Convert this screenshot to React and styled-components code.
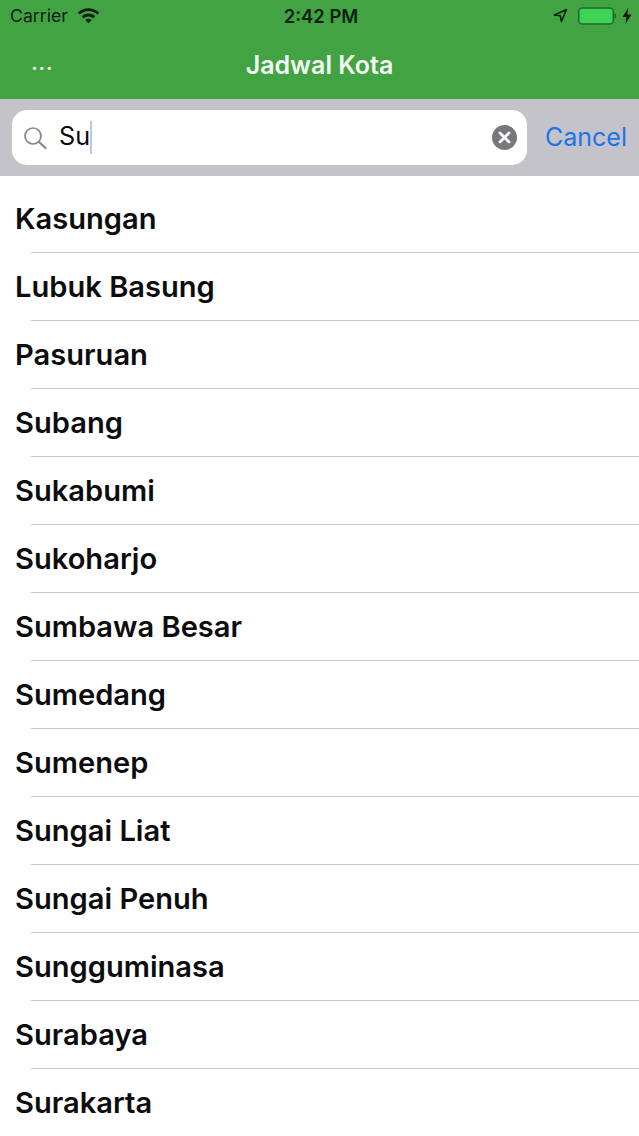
import React from 'react';
import styled, { createGlobalStyle } from 'styled-components';

const Global = createGlobalStyle`
  html, body { margin: 0; padding: 0; background: #fff; }
  body { width: 639px; height: 1136px; overflow: hidden; font-family: Inter, "Liberation Sans", sans-serif; }
`;
const Page = styled.div`width: 639px; height: 1136px; overflow: hidden; display: flex; flex-direction: column;`;
const Header = styled.header`height: 99px; background: #42a343; display: flex; flex-direction: column; flex: none;`;
const StatusBar = styled.div`
  height: 32px; box-sizing: border-box; padding: 0 7px 1px 10px; display: flex; align-items: center; justify-content: space-between;
  color: #0d1f0e;
`;
const StatusSide = styled.div`flex: 1; display: flex; align-items: center; gap: ${p => p.$gap || 9}px; justify-content: ${p => p.$end ? 'flex-end' : 'flex-start'};`;
const BatteryGroup = styled.div`display: flex; align-items: center; gap: 5px;`;
const Time = styled.div`font-weight: 600; font-size: 18.4px;`;
const Carrier = styled.span`font-size: 17.7px; font-weight: 400;`;
const NavBar = styled.div`flex: 1; position: relative; display: flex; align-items: center; justify-content: center; padding-bottom: 2px;`;
const Title = styled.div`color: #f4faf4; font-size: 25px; font-weight: 600;`;
const Back = styled.div`position: absolute; left: 31px; top: 18px; color: #f4faf4; font-size: 23px; font-weight: 500; line-height: 24px; letter-spacing: 0.4px;`;
const SearchBar = styled.div`height: 77px; flex: none; background: #c4c3c9; display: flex; align-items: center; padding: 0 12px; gap: 18px; box-sizing: border-box;`;
const SearchField = styled.div`
  flex: 1; height: 55px; background: #fff; border-radius: 15px; display: flex; align-items: center;
  padding: 0 10px 0 11px; gap: 12px;
`;
const Query = styled.div`flex: 1; display: flex; align-items: center; font-size: 25.2px; color: #0b0b0f; line-height: 33px;`;
const QueryText = styled.span`position: relative; top: -1px;`;
const Caret = styled.span`width: 1.5px; height: 33px; background: #b9c4ef;`;
const Cancel = styled.div`color: #1c73ea; font-size: 25px; font-weight: 400; padding-bottom: 2px;`;
const List = styled.ul`list-style: none; margin: 0; padding: 9px 0 0; flex: 1;`;
const Row = styled.li`
  height: 68px; box-sizing: border-box; padding: 0 0 2px 15px; display: flex; align-items: center;
  position: relative; font-size: 29.1px; font-weight: 600; color: #0c0c0e;
  &::after { content: ''; position: absolute; left: 31px; right: 0; bottom: 0; height: 1.5px; background: #c9c8cd; }
`;

const Wifi = () => (
  <svg width="23" height="17" viewBox="0 0 22 16" fill="#0d1f0e">
    <path d="M11 1C7 1 3.5 2.6 0.8 5.1L2.7 7.1C4.9 5 7.8 3.8 11 3.8S17.1 5 19.3 7.1L21.2 5.1C18.5 2.6 15 1 11 1Z" />
    <path d="M11 6.2C8.5 6.2 6.3 7.2 4.6 8.8L6.5 10.8C7.7 9.7 9.3 9 11 9S14.3 9.7 15.5 10.8L17.4 8.8C15.7 7.2 13.5 6.2 11 6.2Z" />
    <path d="M11 11.2C9.8 11.2 8.8 11.6 8 12.4L11 15.5L14 12.4C13.2 11.6 12.2 11.2 11 11.2Z" />
  </svg>
);
const Location = () => (
  <svg width="15" height="15" viewBox="0 0 15 15" fill="none" stroke="#0d1f0e" strokeWidth="1.6" strokeLinejoin="round">
    <path d="M1.5 7L13.5 1.5L8.5 13.5L7.3 7.8Z" />
  </svg>
);
const Battery = () => (
  <svg width="39" height="18" viewBox="0 0 39 18">
    <rect x="0.75" y="1" width="34.5" height="16" rx="3.5" fill="#3ed257" stroke="#1f6a2c" strokeWidth="1.5" />
    <rect x="36.5" y="6.5" width="1.5" height="5" rx="0.7" fill="#1f6a2c" />
  </svg>
);
const Bolt = () => (
  <svg width="10" height="16" viewBox="0 0 10 16" fill="#0d1f0e">
    <path d="M6.2 0L0.5 9H4.3L3.5 16L9.5 6.6H5.5Z" />
  </svg>
);
const Search = () => (
  <svg width="24" height="24" viewBox="0 0 24 24" fill="none" stroke="#85858b" strokeWidth="1.7" strokeLinecap="round">
    <circle cx="10" cy="10" r="8" />
    <path d="M16 16L22.5 22" strokeWidth="2.2" />
  </svg>
);
const Clear = () => (
  <svg width="25" height="25" viewBox="0 0 25 25">
    <circle cx="12.5" cy="12.5" r="12.5" fill="#77777c" />
    <path d="M8 8L17 17M17 8L8 17" stroke="#fff" strokeWidth="2.8" strokeLinecap="round" />
  </svg>
);

const cities = ['Kasungan', 'Lubuk Basung', 'Pasuruan', 'Subang', 'Sukabumi', 'Sukoharjo', 'Sumbawa Besar', 'Sumedang', 'Sumenep', 'Sungai Liat', 'Sungai Penuh', 'Sungguminasa', 'Surabaya', 'Surakarta'];

export default function App() {
  return (
    <Page>
      <Global />
      <Header>
        <StatusBar>
          <StatusSide><Carrier>Carrier</Carrier><Wifi /></StatusSide>
          <Time>2:42 PM</Time>
          <StatusSide $end $gap={10}><Location /><BatteryGroup><Battery /><Bolt /></BatteryGroup></StatusSide>
        </StatusBar>
        <NavBar>
          <Back>...</Back>
          <Title>Jadwal Kota</Title>
        </NavBar>
      </Header>
      <SearchBar>
        <SearchField>
          <Search />
          <Query><QueryText>Su</QueryText><Caret /></Query>
          <Clear />
        </SearchField>
        <Cancel>Cancel</Cancel>
      </SearchBar>
      <List>
        {cities.map(c => <Row key={c}>{c}</Row>)}
      </List>
    </Page>
  );
}
